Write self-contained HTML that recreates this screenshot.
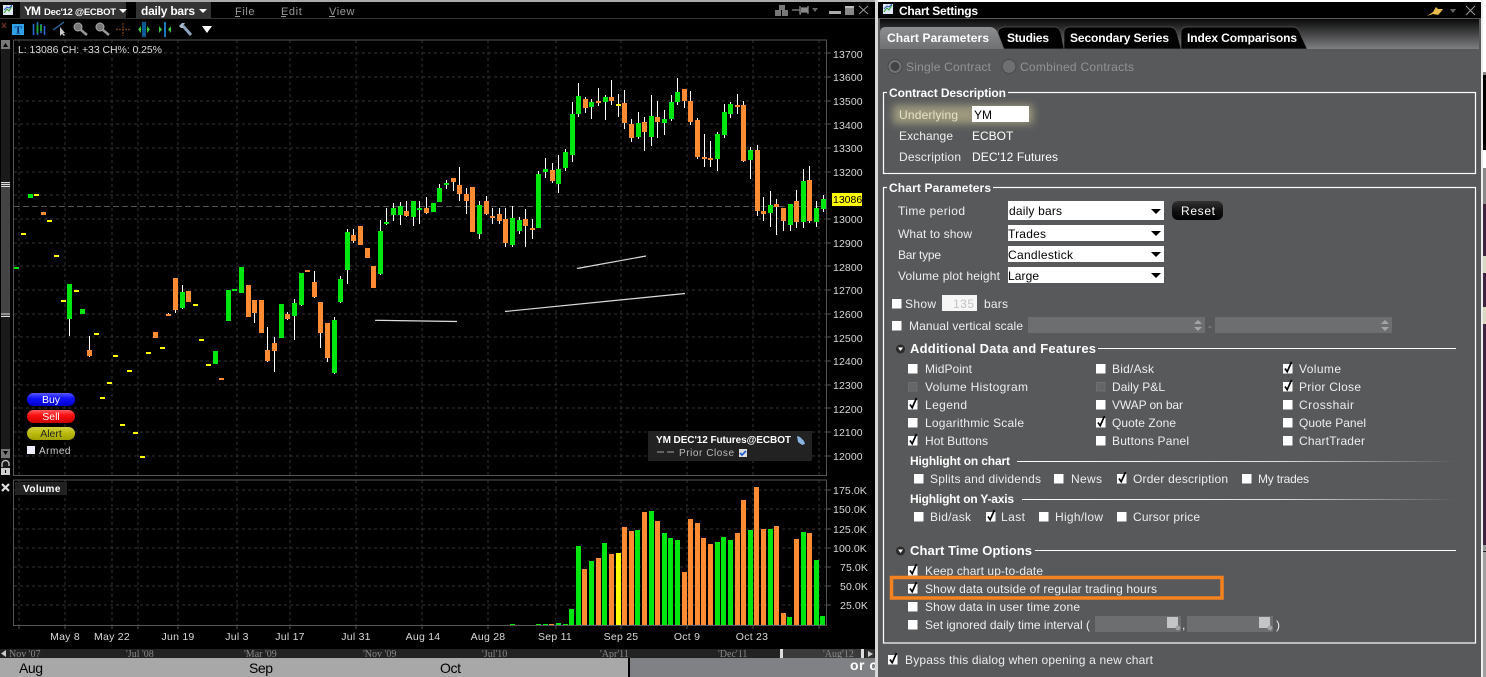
<!DOCTYPE html>
<html><head><meta charset="utf-8"><title>Chart Settings</title>
<style>
html,body{margin:0;padding:0;background:#000;width:1486px;height:677px;overflow:hidden}
svg{display:block;font-family:"Liberation Sans",sans-serif}
.w{fill:#fff;font-size:12px}
.l{fill:#eee;font-size:12px}
.b{fill:#fff;font-size:12px;font-weight:bold}
.h{fill:#fff;font-size:13px;font-weight:bold}
.d{fill:#929395;font-size:12px}
.k{fill:#000;font-size:12px}
.y{fill:#d8d8d8;font-size:10.5px;letter-spacing:.1px}
.x{fill:#d8d8d8;font-size:10.5px;letter-spacing:.25px;text-anchor:middle}
.s{fill:#8a8a8a;font-size:10px;font-family:"Liberation Serif",serif}
.g{stroke:#333;stroke-width:1;stroke-dasharray:3 3;fill:none}
.m{fill:#000;font-size:14px}
</style></head><body>
<svg width="1486" height="677" viewBox="0 0 1486 677" xmlns="http://www.w3.org/2000/svg">
<defs>
<linearGradient id="strip" x1="0" y1="0" x2="0" y2="1"><stop offset="0" stop-color="#0a0a0a"/><stop offset="1" stop-color="#7e7f81"/></linearGradient>
<linearGradient id="tab" x1="0" y1="0" x2="0" y2="1"><stop offset="0" stop-color="#8d8e90"/><stop offset="1" stop-color="#6f7072"/></linearGradient>
<linearGradient id="fade" x1="0" y1="0" x2="1" y2="0"><stop offset="0" stop-color="#fff"/><stop offset=".6" stop-color="#ddd"/><stop offset="1" stop-color="#58595b"/></linearGradient>
<linearGradient id="blue" x1="0" y1="0" x2="0" y2="1"><stop offset="0" stop-color="#5a5aff"/><stop offset=".4" stop-color="#1212ff"/><stop offset="1" stop-color="#0000c8"/></linearGradient>
<linearGradient id="red" x1="0" y1="0" x2="0" y2="1"><stop offset="0" stop-color="#ff6060"/><stop offset=".4" stop-color="#ff1010"/><stop offset="1" stop-color="#c80000"/></linearGradient>
<linearGradient id="olive" x1="0" y1="0" x2="0" y2="1"><stop offset="0" stop-color="#d0d040"/><stop offset=".5" stop-color="#baba0c"/><stop offset="1" stop-color="#a0a000"/></linearGradient>
<linearGradient id="rb" x1="0" y1="0" x2="0" y2="1"><stop offset="0" stop-color="#333"/><stop offset=".5" stop-color="#111"/><stop offset="1" stop-color="#000"/></linearGradient>
<filter id="blur" x="-30%" y="-80%" width="160%" height="260%"><feGaussianBlur stdDeviation="4"/></filter>
<g id="cb"><rect x="0" y="0" width="9.5" height="9.5" fill="#fff"/></g>
<g id="cc"><rect x="0" y="0" width="9.5" height="9.5" fill="#fff"/><path d="M2 4.500l2.200 3.200L8.500-2" stroke="#000" stroke-width="1.700" fill="none"/></g>
<g id="cd"><rect x=".5" y=".5" width="8.500" height="8.500" fill="#646567" stroke="#6f7072"/></g>
<g id="tri"><path d="M0 0h10l-5 5z" fill="#000"/></g>
</defs>

<!-- left window -->
<rect width="875" height="677" fill="#000"/>
<rect width="875" height="2" fill="#aaa"/>
<rect x="875" width="3" height="677" fill="#d8d8d8"/>
<rect x="3" y="5" width="10" height="10" fill="#dfe8f2"/><path d="M4 13l3-4 2 2 3-5" stroke="#2a9a2a" fill="none"/><path d="M4 10l3-3 2 1 3-3" stroke="#3355cc" fill="none"/>
<rect x="20" y="2" width="106" height="16" fill="#333"/>
<text x="24" y="15" class="b" textLength="17">YM</text>
<text x="44" y="15" fill="#fff" font-weight="bold" font-size="9.5" textLength="72">Dec'12 @ECBOT</text>
<path d="M119 9h8l-4 4z" fill="#fff"/>
<rect x="136" y="2" width="75" height="16" fill="#333"/>
<text x="141" y="15" class="b" textLength="54">daily bars</text>
<path d="M199 9h8l-4 4z" fill="#fff"/>
<text x="235" y="15" fill="#999" font-size="11" letter-spacing=".6">File</text><rect x="235" y="16" width="5" height="1" fill="#999"/>
<text x="281" y="15" fill="#999" font-size="11" letter-spacing=".6">Edit</text><rect x="281" y="16" width="5" height="1" fill="#999"/>
<text x="329" y="15" fill="#999" font-size="11" letter-spacing=".6">View</text><rect x="329" y="16" width="6" height="1" fill="#999"/>
<rect y="18" width="875" height="1" fill="#333"/>
<!-- window icons -->
<path d="M779 5h6v5h-6zM775 10h6v6h-6zM782 10h6v6h-6z" fill="#777"/>
<path d="M792 10h8M800 6v8h1M801 8h6v4h-6M808 6v8" stroke="#888" stroke-width="1.300" fill="#888"/>
<path d="M812 8h6l-3 4z" fill="#666"/>
<rect x="829" y="11" width="12" height="3" fill="#aaa"/>
<rect x="845" y="6" width="9" height="9" fill="#888"/><rect x="845" y="6" width="9" height="2" fill="#bbb"/>
<path d="M859 6l9 8M868 6l-9 8" stroke="#999" fill="none"/>
<!-- toolbar -->
<path d="M2 23l4 5M6 23l-4 5" stroke="#5a2a22" stroke-width="1.600"/>
<rect x="12" y="24" width="12" height="11" fill="#2fa0e6"/><text x="14.500" y="33.500" font-family="Liberation Serif" font-weight="bold" font-size="11" fill="#0c2a66">T</text>
<path d="M33.500 24v11M37.500 22v13M41 24v9M44.500 26v9" stroke="#2a6ad0" stroke-width="1.600"/><path d="M37.500 25v8M41 25v6" stroke="#1f9a35" stroke-width="2"/>
<path d="M53 30l11-8" stroke="#2e6fa8" stroke-width="1.200"/><path d="M60 27v9l2-2 2 2 1-1-2-2h2z" fill="#ccc"/>
<circle cx="78" cy="27" r="4" fill="#777" stroke="#aaa"/><path d="M81 30l6 5" stroke="#999" stroke-width="2.500"/>
<circle cx="100" cy="27" r="4" fill="#777" stroke="#aaa"/><path d="M103 30l6 5" stroke="#999" stroke-width="2.500"/>
<path d="M116 29.500h14M123 23v13" stroke="#6a3a14" stroke-width="1.400" stroke-dasharray="2 1"/>
<rect x="142" y="22" width="4" height="15" fill="#0a5a96"/><path d="M141 26v7l-3-3.500zM147 26v7l3-3.500z" fill="#3fc43f"/>
<rect x="164" y="22" width="2" height="15" fill="#1c7ab8"/><path d="M159 26v7l3-3.500zM171 26v7l-3-3.500z" fill="#3fc43f"/>
<path d="M183 26l8 9" stroke="#8ea4bc" stroke-width="3" fill="none"/><path d="M179 26l3-3h3l-2 3 1 2h-3z" fill="#a8bcd0"/>
<path d="M202 26h10l-5 7z" fill="#fff"/>
<!-- left scroll -->
<rect x="1" y="40" width="9" height="435" fill="#1a1a1a"/>
<rect x="1" y="40" width="9" height="9" fill="#777"/><path d="M3 47h5l-2.500-4z" fill="#000"/>
<rect x="1" y="182" width="9" height="134" fill="#444"/>
<path d="M1 182.500h9M1 184.500h9M1 186.500h9M1 314h9M1 316.500h9" stroke="#ddd"/>
<rect x="1" y="449" width="9" height="9" fill="#777"/><path d="M3 451h5l-2.500 4z" fill="#000"/>
<path d="M2 467v-3a3.500 3.500 0 0 1 7 0v2" stroke="#ccc" stroke-width="1.300" fill="none"/><rect x="1" y="468" width="9" height="7" fill="#ccc"/><rect x="5" y="470" width="1" height="3" fill="#000"/>
<!-- grid -->
<path class="g" d="M19 40V475M65 40V475M112 40V475M138 40V475M178 40V475M237 40V475M290 40V475M356 40V475M422 40V475M488 40V475M556 40V475M621 40V475M687 40V475M753 40V475M819 40V475"/>
<path class="g" d="M14 53H826M14 77H826M14 101H826M14 124H826M14 148H826M14 172H826M14 195H826M14 219H826M14 243H826M14 266H826M14 290H826M14 314H826M14 337H826M14 361H826M14 385H826M14 408H826M14 432H826M14 456H826"/>
<path d="M14 206.500H826" stroke="#555" stroke-dasharray="6 3"/>
<path d="M13.500 40V475.500H826.500V40H13.500" stroke="#555" fill="none"/>
<!-- wicks -->
<path stroke="#fff" stroke-width="1" fill="none" d="M69.500 284V336M89.500 336V357M168.500 313V316M175.500 278V313M182.500 285V309M254.500 313V323M267.500 327V362M274.500 337V372M287.500 312V320M294.500 299V340M301.500 273V306M314.500 271V298M320.500 333V348M327.500 358V362M334.500 317V374M340.500 276V303M347.500 229V284M353.500 229V243M380.500 220V275M386.500 208V225M393.500 203V221M400.500 202V225M406.500 201V217M413.500 201V226M419.500 201V224M426.500 197V214M439.500 184V202M446.500 180V189M453.500 178V191M459.500 167V201M466.500 188V214M479.500 201V239M486.500 196V215M492.500 208V224M499.500 208V224M505.500 208V247M512.500 206V247M519.500 217V234M525.500 209V247M532.500 219V239M538.500 171V228M545.500 158V178M552.500 163V183M558.500 155V193M565.500 149V171M572.500 102V162M578.500 83V117M585.500 97V113M591.500 99V119M598.500 88V106M605.500 95V120M611.500 80V105M618.500 94V117M624.500 90V129M631.500 119V142M638.500 112V139M644.500 117V151M651.500 95V146M657.500 101V138M664.500 110V135M671.500 95V121M677.500 78V105M684.500 89V108M690.500 91V125M697.500 118V159M704.500 134V167M710.500 141V167M717.500 132V171M724.500 104V138M730.500 102V118M737.500 94V114M743.500 101V162M750.500 147V179M757.500 145V216M763.500 197V221M770.500 191V227M776.500 199V235M783.500 208V231M790.500 204V231M796.500 190V228M803.500 169V228M809.500 166V223M816.500 201V227M823.500 195V212"/>
<!-- bodies yellow -->
<path fill="#ffff00" d="M34 194h5v2h-5zM47 220h5v2h-5zM21 233h5v2h-5zM54 255h5v2h-5zM74 290h5v2h-5zM61 300h5v2h-5zM94 333h5v2h-5zM113 355h5v2h-5zM127 370h5v2h-5zM107 382h5v2h-5zM100 397h5v2h-5zM120 424h5v2h-5zM133 432h5v2h-5zM140 456h5v2h-5zM146 352h5v2h-5zM160 347h5v2h-5zM193 304h5v2h-5zM199 339h5v2h-5zM206 364h5v2h-5zM616 104h5v2h-5z"/>
<!-- bodies green -->
<path fill="#00e60f" d="M28 194h5v4h-5zM14 267h5v2h-5zM67 284h5v35h-5zM80 309h5v5h-5zM180 292h5v16h-5zM213 351h5v13h-5zM226 290h5v31h-5zM232 289h5v2h-5zM239 267h5v26h-5zM279 304h5v34h-5zM292 303h5v13h-5zM299 273h5v32h-5zM332 320h5v53h-5zM338 279h5v23h-5zM345 232h5v38h-5zM378 231h5v43h-5zM384 222h5v2h-5zM391 208h5v7h-5zM398 206h5v9h-5zM411 201h5v16h-5zM417 208h5v2h-5zM431 203h5v9h-5zM437 188h5v14h-5zM444 183h5v2h-5zM477 205h5v29h-5zM510 218h5v27h-5zM517 220h5v11h-5zM536 174h5v54h-5zM543 169h5v3h-5zM556 169h5v15h-5zM563 152h5v16h-5zM570 114h5v41h-5zM576 96h5v18h-5zM589 102h5v5h-5zM603 97h5v5h-5zM636 123h5v14h-5zM649 116h5v21h-5zM662 119h5v4h-5zM669 102h5v17h-5zM675 92h5v10h-5zM715 134h5v25h-5zM722 112h5v23h-5zM728 104h5v10h-5zM748 150h5v10h-5zM768 205h5v8h-5zM788 204h5v21h-5zM801 181h5v41h-5zM814 208h5v14h-5zM821 199h5v10h-5z"/>
<!-- bodies orange -->
<path fill="#ff8c33" d="M41 212h5v3h-5zM87 350h5v6h-5zM153 332h5v6h-5zM166 314h5v2h-5zM173 278h5v32h-5zM186 291h5v11h-5zM219 378h5v2h-5zM246 285h5v32h-5zM252 300h5v13h-5zM259 300h5v33h-5zM265 350h5v11h-5zM272 343h5v8h-5zM285 314h5v5h-5zM305 270h5v2h-5zM312 282h5v15h-5zM318 302h5v31h-5zM325 323h5v35h-5zM351 235h5v6h-5zM358 226h5v19h-5zM365 248h5v10h-5zM371 266h5v22h-5zM404 211h5v5h-5zM424 208h5v5h-5zM451 178h5v4h-5zM457 185h5v9h-5zM464 194h5v7h-5zM470 187h5v45h-5zM484 201h5v13h-5zM490 216h5v2h-5zM497 214h5v7h-5zM503 219h5v24h-5zM523 219h5v7h-5zM530 228h5v2h-5zM550 170h5v11h-5zM583 99h5v9h-5zM596 101h5v2h-5zM609 97h5v4h-5zM622 103h5v20h-5zM629 124h5v14h-5zM642 122h5v10h-5zM655 117h5v5h-5zM682 89h5v12h-5zM688 101h5v21h-5zM695 120h5v37h-5zM702 157h5v2h-5zM708 158h5v2h-5zM735 105h5v2h-5zM741 105h5v56h-5zM755 150h5v61h-5zM761 211h5v3h-5zM774 204h5v3h-5zM781 208h5v13h-5zM794 201h5v21h-5zM807 180h5v41h-5z"/>
<!-- drawn lines -->
<path d="M375 320.300L457 321.500M577 268.500L646 256M505 311.500L685 293.500" stroke="#ddd" stroke-width="1.200" fill="none"/>
<!-- y labels -->
<text class="y" x="833" y="58">13700</text><text class="y" x="833" y="81">13600</text><text class="y" x="833" y="105">13500</text><text class="y" x="833" y="129">13400</text><text class="y" x="833" y="152">13300</text><text class="y" x="833" y="176">13200</text><text class="y" x="833" y="223">13000</text><text class="y" x="833" y="247">12900</text><text class="y" x="833" y="271">12800</text><text class="y" x="833" y="294">12700</text><text class="y" x="833" y="318">12600</text><text class="y" x="833" y="342">12500</text><text class="y" x="833" y="365">12400</text><text class="y" x="833" y="389">12300</text><text class="y" x="833" y="413">12200</text><text class="y" x="833" y="436">12100</text><text class="y" x="833" y="460">12000</text>
<rect x="832" y="193" width="30" height="13" fill="#ffff00"/><text x="833" y="203" fill="#000" font-size="10.500">13086</text>
<path d="M827 53h4M827 77h4M827 101h4M827 124h4M827 148h4M827 172h4M827 219h4M827 243h4M827 266h4M827 290h4M827 314h4M827 337h4M827 361h4M827 385h4M827 408h4M827 432h4M827 456h4" stroke="#555"/>
<text x="18" y="53" fill="#ddd" font-size="10.500" textLength="144">L: 13086 CH: +33 CH%: 0.25%</text>
<!-- hot buttons -->
<rect x="27" y="393" width="48" height="13" rx="6.500" fill="url(#blue)"/><text x="51" y="403" fill="#fff" font-size="10.500" text-anchor="middle">Buy</text>
<rect x="27" y="410" width="48" height="13" rx="6.500" fill="url(#red)"/><text x="51" y="420" fill="#fff" font-size="10.500" text-anchor="middle">Sell</text>
<rect x="27" y="427" width="48" height="13" rx="6.500" fill="url(#olive)"/><text x="51" y="437" fill="#222" font-size="10.500" text-anchor="middle">Alert</text>
<rect x="27" y="446" width="8" height="8" fill="#eef"/><text x="39" y="454" fill="#ccc" font-size="10" letter-spacing=".5">Armed</text>
<!-- study legend -->
<rect x="648" y="431" width="164" height="30" fill="#222"/>
<text x="656" y="443" fill="#fff" font-size="10" font-weight="bold" textLength="135">YM DEC'12 Futures@ECBOT</text>
<path d="M797 436l3 1 4 4 1 3-3 1-4-3z" fill="#8ab4e0"/>
<path d="M657 452h7M667 452h7" stroke="#777" stroke-width="1.500"/>
<text x="679" y="456" fill="#bbb" font-size="10" textLength="55">Prior Close</text>
<rect x="739" y="449" width="8" height="8" fill="#ddd"/><path d="M740 453l2 2 4-4" stroke="#1a5cd0" stroke-width="1.600" fill="none"/>
<!-- volume panel -->
<path d="M2 484l7 7M9 484l-7 7" stroke="#ddd" stroke-width="2.200"/>
<path class="g" d="M19 480V625M65 480V625M112 480V625M138 480V625M178 480V625M237 480V625M290 480V625M356 480V625M422 480V625M488 480V625M556 480V625M621 480V625M687 480V625M753 480V625M819 480V625"/>
<path class="g" d="M14 490H826M14 509H826M14 529H826M14 548H826M14 567H826M14 586H826M14 605H826"/>
<path d="M13.500 480V625.500H826.500V480H13.500" stroke="#555" fill="none"/>
<rect x="15" y="482" width="52" height="13" fill="#222"/><text x="23" y="492" fill="#fff" font-size="10" font-weight="bold" letter-spacing=".4">Volume</text>
<path fill="#00e60f" d="M510 624h5v1h-5zM536 624h5v1h-5zM543 624h5v1h-5zM556 623h5v2h-5zM563 624h5v1h-5zM569 609h5v16h-5zM576 546h5v79h-5zM589 561h5v64h-5zM602 543h5v82h-5zM635 530h5v95h-5zM649 511h5v114h-5zM662 533h5v92h-5zM668 538h5v87h-5zM675 540h5v85h-5zM715 542h5v83h-5zM721 537h5v88h-5zM728 540h5v85h-5zM748 530h5v95h-5zM768 529h5v96h-5zM787 617h5v8h-5zM801 532h5v93h-5zM814 560h5v65h-5zM820 616h5v9h-5z"/>
<path fill="#ff8c33" d="M549 624h5v1h-5zM582 569h5v56h-5zM596 558h5v67h-5zM609 554h5v71h-5zM622 527h5v98h-5zM629 531h5v94h-5zM642 512h5v113h-5zM655 521h5v104h-5zM682 572h5v53h-5zM688 519h5v106h-5zM695 523h5v102h-5zM701 538h5v87h-5zM708 544h5v81h-5zM735 533h5v92h-5zM741 500h5v125h-5zM754 487h5v138h-5zM761 529h5v96h-5zM774 526h5v99h-5zM781 613h5v12h-5zM794 539h5v86h-5zM807 533h5v92h-5z"/>
<path fill="#ffff00" d="M616 553h5v72h-5z"/>
<text class="y" x="833" y="494">175.0K</text><text class="y" x="833" y="513">150.0K</text><text class="y" x="833" y="533">125.0K</text><text class="y" x="833" y="552">100.0K</text><text class="y" x="840" y="571">75.0K</text><text class="y" x="840" y="590">50.0K</text><text class="y" x="840" y="609">25.0K</text>
<path d="M827 490h4M827 509h4M827 529h4M827 548h4M827 567h4M827 586h4M827 605h4M19 625v4M65 625v4M112 625v4M138 625v4M178 625v4M237 625v4M290 625v4M356 625v4M422 625v4M488 625v4M556 625v4M621 625v4M687 625v4M753 625v4M819 625v4" stroke="#555"/>
<text class="x" x="65" y="640">May 8</text><text class="x" x="112" y="640">May 22</text><text class="x" x="178" y="640">Jun 19</text><text class="x" x="237" y="640">Jul 3</text><text class="x" x="290" y="640">Jul 17</text><text class="x" x="356" y="640">Jul 31</text><text class="x" x="423" y="640">Aug 14</text><text class="x" x="488" y="640">Aug 28</text><text class="x" x="555" y="640">Sep 11</text><text class="x" x="621" y="640">Sep 25</text><text class="x" x="687" y="640">Oct 9</text><text class="x" x="752" y="640">Oct 23</text>
<!-- scroller -->
<rect y="649" width="875" height="9" fill="#222"/>
<rect x="780" y="649" width="83" height="9" fill="#3a3a3a"/>
<rect x="780" y="649" width="3" height="9" fill="#ddd"/><rect x="861" y="649" width="3" height="9" fill="#ddd"/>
<path d="M1 653.500l5-3.500v7z" fill="#ccc"/>
<text class="s" x="9" y="657">Nov '07</text><text class="s" x="126" y="657">'Jul '08</text><text class="s" x="244" y="657">'Mar '09</text><text class="s" x="363" y="657">'Nov '09</text><text class="s" x="482" y="657">'Jul'10</text><text class="s" x="600" y="657">'Apr'11</text><text class="s" x="718" y="657">'Dec'11</text><text class="s" x="823" y="657">'Aug'12</text>
<rect x="866" y="650" width="8" height="8" fill="#333"/><path d="M868 651l5 3-5 3z" fill="#ccc"/>
<!-- below -->
<rect y="658" width="628" height="19" fill="#a8a8a8"/>
<rect x="628" y="658" width="2" height="19" fill="#000"/>
<rect x="630" y="658" width="245" height="19" fill="#808184"/>
<text class="m" x="19" y="673" textLength="24">Aug</text><text class="m" x="249" y="673" textLength="24">Sep</text><text class="m" x="440" y="673" textLength="21">Oct</text>
<text x="850" y="670" fill="#fff" font-size="14" font-weight="bold" letter-spacing=".5">or c</text>
<rect x="875" y="658" width="3" height="19" fill="#d8d8d8"/>

<!-- right window -->
<rect x="878" y="0" width="604" height="677" fill="#58595b"/>
<rect x="878" y="0" width="604" height="2" fill="#fff"/>
<rect x="878" y="2" width="603" height="16" fill="#000"/>
<rect x="880" y="19" width="599" height="30" fill="url(#strip)"/>
<rect x="883" y="4" width="10" height="10" fill="#dfe8f2"/><path d="M884 12l3-4 2 2 3-5" stroke="#2a9a2a" fill="none"/><path d="M884 9l3-3 2 1 3-3" stroke="#3355cc" fill="none"/>
<text x="899" y="15" class="b" textLength="79">Chart Settings</text>
<path d="M1427 16l6-4 3-5 2 2 5 0-3 4-2 2-5-1z" fill="#e8bc50"/><path d="M1450 9h6l-3 4z" fill="#666"/>
<path d="M1466 6l9 9M1475 6l-9 9" stroke="#999" fill="none"/>
<!-- tabs -->
<path d="M880 49V33Q880 27 886 27H990Q995 27 998 33L1006 49Z" fill="url(#tab)"/>
<path d="M1004 49L998 33Q998 28 1004 27H1055Q1059 27 1061 33L1064 49Z" fill="#000" stroke="#555" stroke-width=".7"/>
<path d="M1064 49V33Q1064 27 1070 27H1170Q1175 27 1177 33L1181 49Z" fill="#000" stroke="#555" stroke-width=".7"/>
<path d="M1181 49V33Q1181 27 1187 27H1293Q1298 27 1300 33L1307 49Z" fill="#000" stroke="#555" stroke-width=".7"/>
<text x="887" y="42" class="b" textLength="102">Chart Parameters</text>
<text x="1007" y="42" class="b" textLength="42">Studies</text>
<text x="1070" y="42" class="b" textLength="99">Secondary Series</text>
<text x="1187" y="42" class="b" textLength="110">Index Comparisons</text>
<!-- radios -->
<circle cx="895" cy="66.500" r="7" fill="#737476" stroke="#47484a"/><circle cx="895" cy="66.500" r="4.500" fill="#424345"/>
<circle cx="1009" cy="66.500" r="7" fill="#6e6f71" stroke="#47484a"/>
<text x="906" y="71" class="d" textLength="85">Single Contract</text>
<text x="1020" y="71" class="d" textLength="114">Combined Contracts</text>
<!-- contract box -->
<rect x="883.500" y="92.500" width="592" height="81" fill="none" stroke="#fff" stroke-width="1.200"/>
<rect x="887" y="86" width="121" height="14" fill="#58595b"/>
<text x="889" y="97" class="b" textLength="117">Contract Description</text>
<rect x="893" y="105" width="140" height="19" fill="#fff6b0" opacity=".4" filter="url(#blur)"/>
<text x="899" y="119" fill="#e6e3c4" font-size="12" textLength="59">Underlying</text>
<rect x="972" y="106" width="57" height="16" fill="#fff"/><text x="974" y="119" class="k">YM</text>
<text x="899" y="140" class="l" textLength="54">Exchange</text><text x="972" y="140" class="w">ECBOT</text>
<text x="899" y="161" class="l" textLength="62">Description</text><text x="972" y="161" class="w" textLength="86">DEC'12 Futures</text>
<!-- chart params box -->
<rect x="883.500" y="187.500" width="592" height="455.500" fill="none" stroke="#fff" stroke-width="1.200"/>
<rect x="887" y="181" width="106" height="14" fill="#58595b"/>
<text x="889" y="192" class="b" textLength="102">Chart Parameters</text>
<text x="898" y="215" class="l" textLength="67">Time period</text>
<rect x="1008" y="201" width="156" height="19" fill="#fff"/><text x="1009" y="215" class="k" textLength="53">daily bars</text><use href="#tri" x="1151" y="209"/>
<rect x="1172" y="201" width="51" height="19" rx="6" fill="url(#rb)"/><text x="1181" y="215" class="w" textLength="34">Reset</text>
<text x="898" y="238" class="l" textLength="74">What to show</text>
<rect x="1008" y="225" width="156" height="16" fill="#fff"/><text x="1008" y="238" class="k" textLength="38">Trades</text><use href="#tri" x="1151" y="231"/>
<text x="898" y="259" class="l" textLength="43">Bar type</text>
<rect x="1008" y="246" width="156" height="16" fill="#fff"/><text x="1008" y="259" class="k" textLength="65">Candlestick</text><use href="#tri" x="1151" y="252"/>
<text x="898" y="280" class="l" textLength="102">Volume plot height</text>
<rect x="1008" y="267" width="156" height="16" fill="#fff"/><text x="1008" y="280" class="k" textLength="31">Large</text><use href="#tri" x="1151" y="273"/>
<use href="#cb" x="892" y="299"/><text x="905" y="308" class="l" textLength="31">Show</text>
<rect x="942" y="295" width="35" height="16" fill="#fff" fill-opacity=".95"/><text x="953" y="308" fill="#c4c4c4" font-size="12" textLength="21">135</text>
<text x="984" y="308" class="l" textLength="24">bars</text>
<use href="#cb" x="892" y="321"/><text x="909" y="330" class="l" textLength="114">Manual vertical scale</text>
<rect x="1028" y="317" width="177" height="16" fill="#6d6e70"/><rect x="1215" y="317" width="177" height="16" fill="#6d6e70"/>
<path d="M1194 324l4-4 4 4zM1194 327l4 4 4-4zM1381 324l4-4 4 4zM1381 327l4 4 4-4z" fill="#a4a5a7"/>
<text x="1208" y="330" class="d">-</text>
<!-- additional -->
<circle cx="900.500" cy="349" r="4.500" fill="#2a2a2a"/><path d="M898 347.500h5l-2.500 3.500z" fill="#fff"/>
<text x="910" y="353" class="h" textLength="186">Additional Data and Features</text>
<rect x="1098" y="348" width="358" height="1" fill="#fff"/>
<use href="#cb" x="908" y="364"/><text x="925" y="373" class="l" textLength="47">MidPoint</text>
<use href="#cd" x="908" y="382"/><text x="925" y="391" class="l" textLength="103">Volume Histogram</text>
<use href="#cc" x="908" y="400"/><text x="925" y="409" class="l" textLength="42">Legend</text>
<use href="#cb" x="908" y="418"/><text x="925" y="427" class="l" textLength="99">Logarithmic Scale</text>
<use href="#cc" x="908" y="436"/><text x="925" y="445" class="l" textLength="63">Hot Buttons</text>
<use href="#cb" x="1096" y="364"/><text x="1112" y="373" class="l" textLength="42">Bid/Ask</text>
<use href="#cd" x="1096" y="382"/><text x="1112" y="391" class="l" textLength="53">Daily P&amp;L</text>
<use href="#cb" x="1096" y="400"/><text x="1112" y="409" class="l" textLength="71">VWAP on bar</text>
<use href="#cc" x="1096" y="418"/><text x="1112" y="427" class="l" textLength="64">Quote Zone</text>
<use href="#cb" x="1096" y="436"/><text x="1112" y="445" class="l" textLength="77">Buttons Panel</text>
<use href="#cc" x="1283" y="364"/><text x="1299" y="373" class="l" textLength="42">Volume</text>
<use href="#cc" x="1283" y="382"/><text x="1299" y="391" class="l" textLength="62">Prior Close</text>
<use href="#cb" x="1283" y="400"/><text x="1299" y="409" class="l" textLength="55">Crosshair</text>
<use href="#cb" x="1283" y="418"/><text x="1299" y="427" class="l" textLength="67">Quote Panel</text>
<use href="#cb" x="1283" y="436"/><text x="1299" y="445" class="l" textLength="66">ChartTrader</text>
<!-- highlight -->
<text x="910" y="465" class="b" textLength="100">Highlight on chart</text>
<rect x="1017" y="461" width="439" height="1" fill="url(#fade)"/>
<use href="#cb" x="914" y="474"/><text x="930" y="483" class="l" textLength="111">Splits and dividends</text>
<use href="#cb" x="1054" y="474"/><text x="1071" y="483" class="l" textLength="31">News</text>
<use href="#cc" x="1117" y="474"/><text x="1133" y="483" class="l" textLength="95">Order description</text>
<use href="#cb" x="1242" y="474"/><text x="1258" y="483" class="l" textLength="51">My trades</text>
<text x="910" y="503" class="b" textLength="104">Highlight on Y-axis</text>
<rect x="1022" y="499" width="434" height="1" fill="url(#fade)"/>
<use href="#cb" x="914" y="512"/><text x="930" y="521" class="l" textLength="41">Bid/ask</text>
<use href="#cc" x="986" y="512"/><text x="1001" y="521" class="l" textLength="24">Last</text>
<use href="#cb" x="1039" y="512"/><text x="1055" y="521" class="l" textLength="48">High/low</text>
<use href="#cb" x="1117" y="512"/><text x="1133" y="521" class="l" textLength="67">Cursor price</text>
<!-- time options -->
<circle cx="900.500" cy="551" r="4.500" fill="#2a2a2a"/><path d="M898 549.500h5l-2.500 3.500z" fill="#fff"/>
<text x="910" y="555" class="h" textLength="122">Chart Time Options</text>
<rect x="1035" y="550" width="421" height="1" fill="#fff"/>
<use href="#cc" x="908" y="566"/><text x="925" y="575" class="l" textLength="118">Keep chart up-to-date</text>
<use href="#cc" x="908" y="584"/><text x="925" y="593" class="l" textLength="232">Show data outside of regular trading hours</text>
<use href="#cb" x="908" y="602"/><text x="925" y="611" class="l" textLength="155">Show data in user time zone</text>
<use href="#cb" x="908" y="620"/><text x="925" y="629" class="l" textLength="165">Set ignored daily time interval (</text>
<rect x="1095" y="616" width="86" height="16" fill="#6d6e70"/><rect x="1187" y="616" width="86" height="16" fill="#6d6e70"/>
<rect x="1167" y="617" width="11" height="11" fill="#c4c5c7"/><circle cx="1178" cy="628" r="2.500" fill="#a0a1a3"/>
<rect x="1259" y="617" width="11" height="11" fill="#c4c5c7"/><circle cx="1270" cy="628" r="2.500" fill="#a0a1a3"/>
<text x="1182" y="629" class="l">,</text><text x="1276" y="629" class="l">)</text>
<rect x="891.500" y="577.500" width="330.500" height="20.500" fill="none" stroke="#f58220" stroke-width="3.500"/>
<use href="#cc" x="888" y="655"/><text x="905" y="664" class="l" textLength="248">Bypass this dialog when opening a new chart</text>

<!-- right sliver -->
<rect x="1481" y="0" width="2" height="677" fill="#eee"/>
<rect x="1483" y="0" width="3" height="72" fill="#fff"/>
<rect x="1483" y="72" width="3" height="3" fill="#888"/>
<rect x="1483" y="75" width="3" height="75" fill="#000"/>
<rect x="1483" y="150" width="3" height="18" fill="#fff"/>
<rect x="1483" y="168" width="3" height="36" fill="#888"/>
<rect x="1483" y="204" width="3" height="341" fill="#3f2340"/>
<rect x="1483" y="256" width="3" height="17" fill="#d8d8c0"/>
<rect x="1483" y="307" width="3" height="17" fill="#d8d8c0"/>
<rect x="1483" y="545" width="3" height="6" fill="#999"/>
<rect x="1483" y="551" width="3" height="1" fill="#222"/>
<rect x="1483" y="552" width="3" height="125" fill="#a0a0a0"/>
</svg>
</body></html>
